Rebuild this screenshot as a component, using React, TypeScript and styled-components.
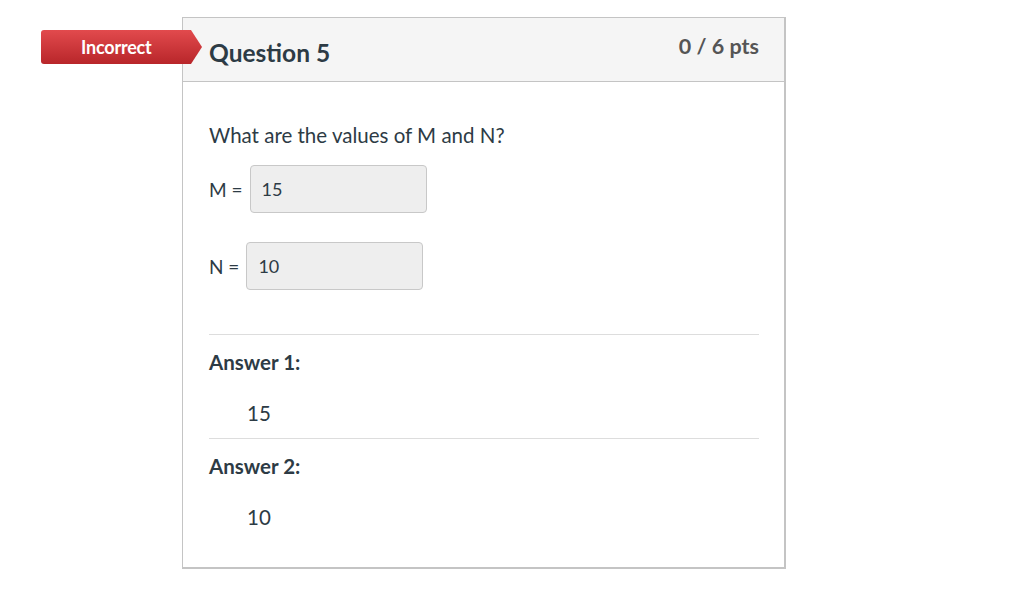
import React from "react";
import styled, { createGlobalStyle } from "styled-components";

const Global = createGlobalStyle`
  html, body { margin: 0; padding: 0; background: #fff; }
  body { font-family: Lato, "Open Sans", sans-serif; color: #2d3b45; }
`;

const Page = styled.div`
  position: relative;
  padding: 17px 0 0 182px;
  width: 1024px;
  height: 593px;
  box-sizing: border-box;
`;

const Card = styled.div`
  position: relative;
  width: 604px;
  height: 552px;
  box-sizing: border-box;
  border: 1px solid #c4c4c4;
  border-bottom-width: 2px;
  border-right-width: 2px;
`;

const Badge = styled.div`
  position: absolute;
  left: -142px;
  top: 12px;
  width: 161px;
  height: 34px;
  display: flex;
  align-items: center;
  padding-left: 40px;
  box-sizing: border-box;
  color: #fff;
  font-size: 18px;
  font-weight: 700;
  letter-spacing: -0.2px;
  background: linear-gradient(#e24a4d, #b8262a);
  border-radius: 3px 0 0 3px;
  clip-path: polygon(0 0, 150px 0, 161px 50%, 150px 100%, 0 100%);
`;

const Header = styled.div`
  display: flex;
  justify-content: space-between;
  align-items: flex-start;
  height: 63px;
  padding: 0 25px 0 26px;
  background: #f5f5f5;
  border-bottom: 1px solid #c4c4c4;
`;

const Title = styled.h2`
  margin: 20px 0 0;
  font-size: 24.5px;
  font-weight: 700;
  line-height: 30px;
  color: #2d3b45;
`;

const Points = styled.div`
  margin-top: 14px;
  font-size: 21.5px;
  font-weight: 700;
  line-height: 28px;
  color: #555;
`;

const Body = styled.div`
  padding: 39px 25px 0 26px;
`;

const Question = styled.p`
  margin: 0 0 16px;
  font-size: 20.5px;
  line-height: 28px;
`;

const FieldRow = styled.div`
  display: flex;
  align-items: center;
  margin-bottom: 29px;
  font-size: 19px;
`;

const FieldLabel = styled.span`
  margin-right: 7px;
`;

const ValueBox = styled.div`
  width: 177px;
  height: 48px;
  box-sizing: border-box;
  padding: 0 11px 1px;
  display: flex;
  align-items: center;
  background: #eee;
  border: 1px solid #c8c8c8;
  border-radius: 4px;
  font-size: 18px;
`;

const Answer = styled.div`
  border-top: 1px solid #ddd;
  padding-top: 13px;
  height: 104px;
  box-sizing: border-box;
`;

const FirstAnswer = styled(Answer)`
  margin-top: 44px;
`;

const AnswerLabel = styled.div`
  font-size: 20.5px;
  font-weight: 700;
  line-height: 28px;
`;

const AnswerValue = styled.div`
  margin: 23px 0 0 38px;
  font-size: 20.5px;
  line-height: 28px;
`;

export default function App() {
  return (
    <Page>
      <Global />
      <Card>
        <Badge>Incorrect</Badge>
        <Header>
          <Title>Question 5</Title>
          <Points>0 / 6 pts</Points>
        </Header>
        <Body>
          <Question>What are the values of M and N?</Question>
          <FieldRow>
            <FieldLabel>M =</FieldLabel>
            <ValueBox>15</ValueBox>
          </FieldRow>
          <FieldRow>
            <FieldLabel>N =</FieldLabel>
            <ValueBox>10</ValueBox>
          </FieldRow>
          <FirstAnswer>
            <AnswerLabel>Answer 1:</AnswerLabel>
            <AnswerValue>15</AnswerValue>
          </FirstAnswer>
          <Answer>
            <AnswerLabel>Answer 2:</AnswerLabel>
            <AnswerValue>10</AnswerValue>
          </Answer>
        </Body>
      </Card>
    </Page>
  );
}
